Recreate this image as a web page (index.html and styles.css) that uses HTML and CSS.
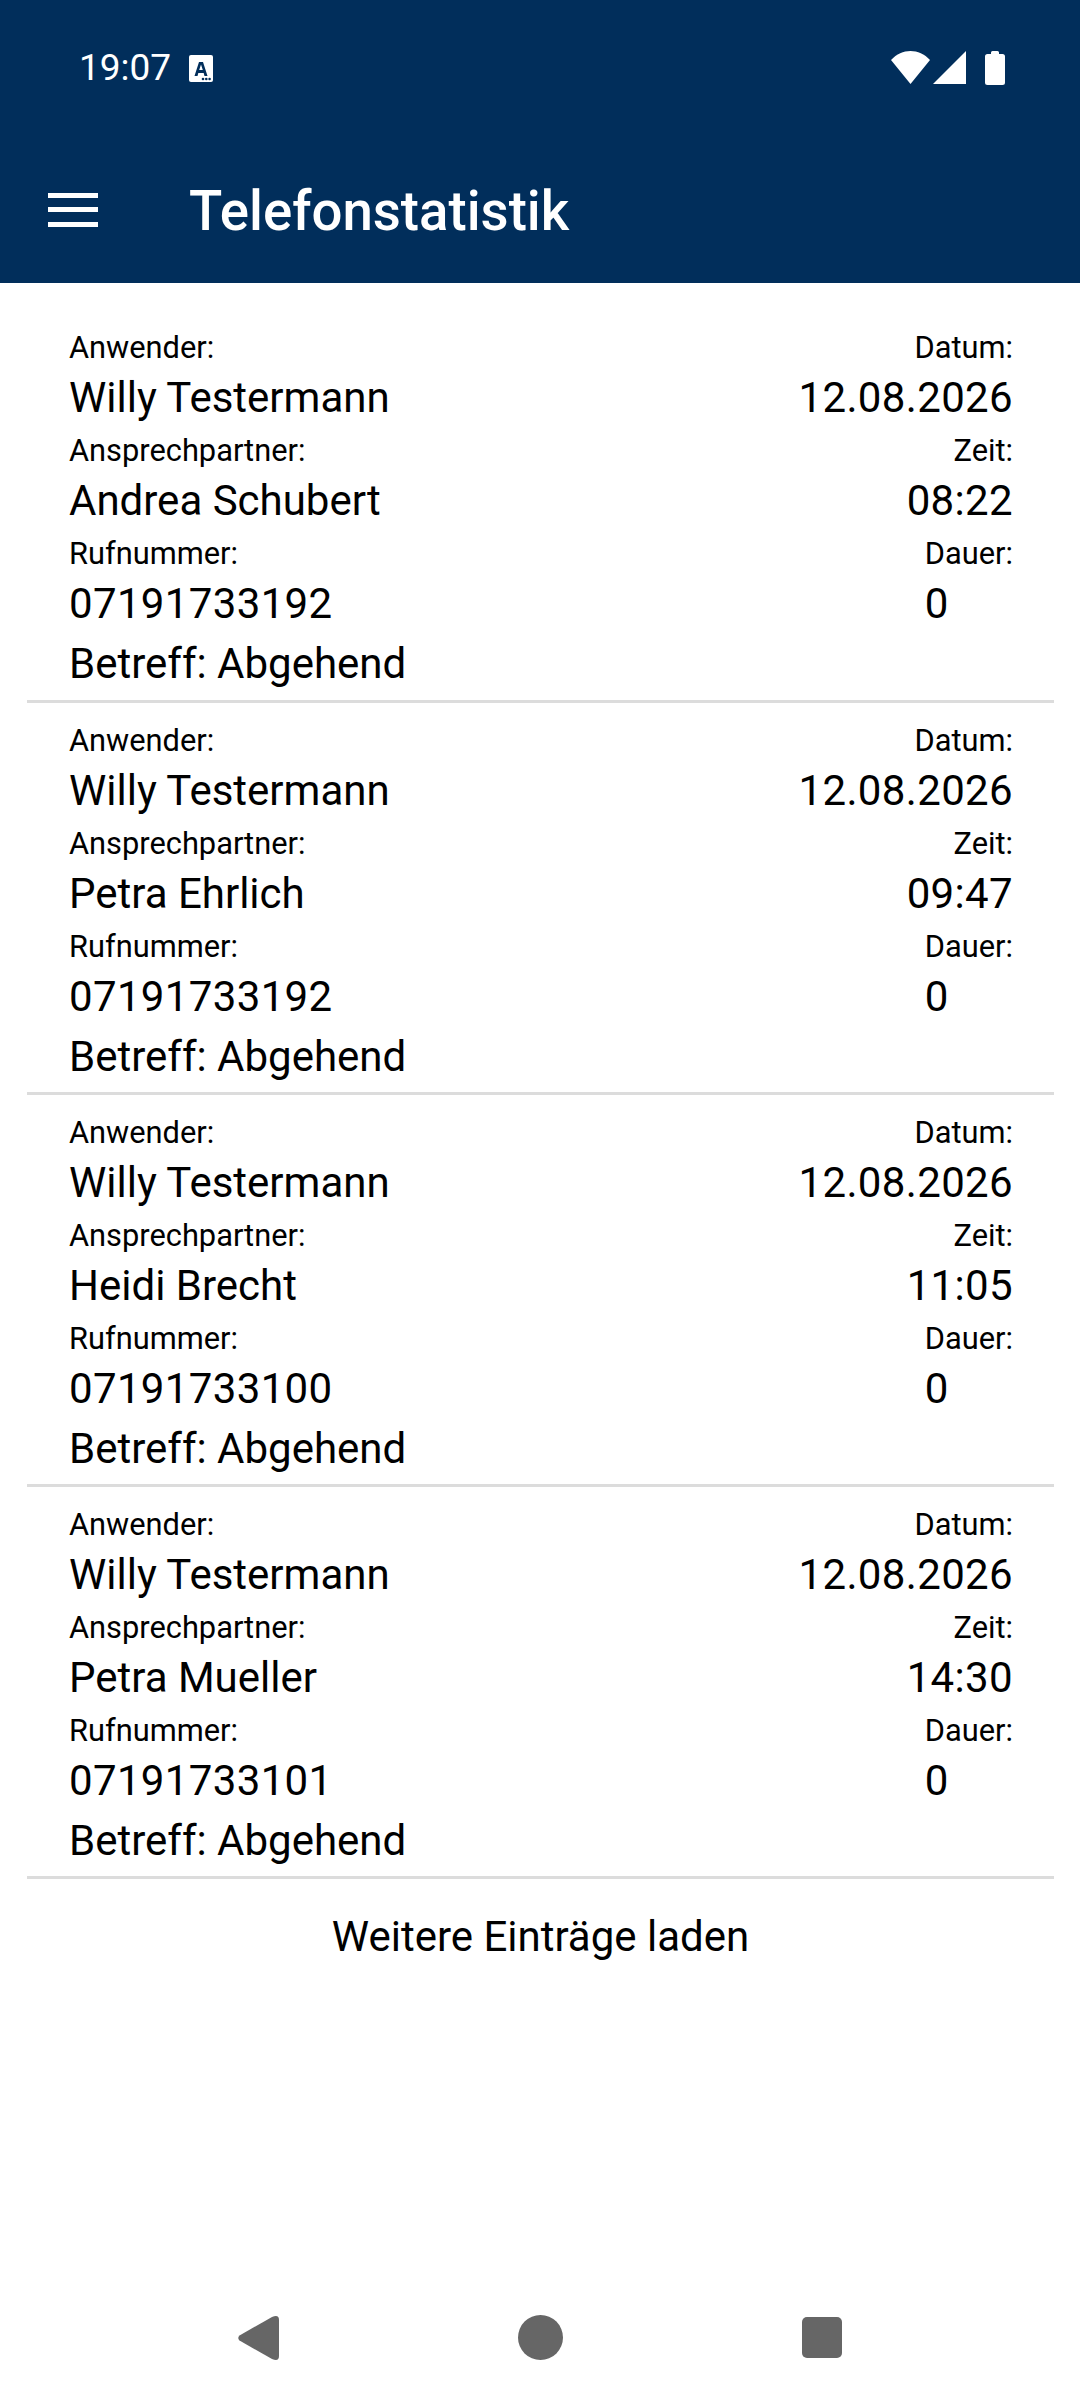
FILE: index.html
```html
<!DOCTYPE html>
<html lang="de">
<head>
  <meta charset="UTF-8">
  <title>Telefonstatistik</title>
  <meta name="viewport" content="width=device-width, initial-scale=1.0">
  <link rel="stylesheet" href="styles.css">
</head>
<body>
  <header class="appbar">
    <div class="status">
      <span class="clock">19:07</span>
      <svg class="status-badge" width="24" height="27" viewBox="0 0 24 27">
        <rect width="24" height="27" rx="2" fill="#fff"/>
        <path fill-rule="evenodd" d="M5.500 21 L10 7 H14 L18.500 21 H15.500 L14.700 18 H9.300 L8.500 21 Z M10.200 15 H13.800 L12 9.500 Z" fill="#012e5b"/>
        <circle cx="14" cy="24" r="1.300" fill="#012e5b"/>
        <circle cx="17.300" cy="24" r="1.300" fill="#012e5b"/>
        <circle cx="20.600" cy="24" r="1.300" fill="#012e5b"/>
      </svg>
      <span class="status-icons">
        <svg width="39" height="33" viewBox="0 0 39 33"><path d="M0 9 C11 -3 28 -3 39 9 L19.500 33 Z" fill="#fff"/></svg>
        <svg class="signal" width="33" height="33" viewBox="0 0 33 33"><path d="M33 0 V33 H0 Z" fill="#fff"/></svg>
        <svg class="battery" width="20" height="34" viewBox="0 0 20 34"><path d="M6 3 V1.500 Q6 0 7.500 0 H12.500 Q14 0 14 1.500 V3 H17.500 Q20 3 20 5.500 V31.500 Q20 34 17.500 34 H2.500 Q0 34 0 31.500 V5.500 Q0 3 2.500 3 Z" fill="#fff"/></svg>
      </span>
    </div>
    <div class="toolbar">
      <button class="menu" aria-label="Menü"><i></i><i></i><i></i></button>
      <h1>Telefonstatistik</h1>
    </div>
  </header>

  <main class="list">
    <section class="entry">
      <div class="row"><div><label>Anwender:</label><p>Willy Testermann</p></div><div class="right"><label>Datum:</label><p class="num">12.08.2026</p></div></div>
      <div class="row"><div><label>Ansprechpartner:</label><p>Andrea Schubert</p></div><div class="right"><label>Zeit:</label><p class="num">08:22</p></div></div>
      <div class="row"><div><label>Rufnummer:</label><p class="num">07191733192</p></div><div class="right start"><label>Dauer:</label><p>0</p></div></div>
      <p class="subject">Betreff: Abgehend</p>
    </section>
    <section class="entry">
      <div class="row"><div><label>Anwender:</label><p>Willy Testermann</p></div><div class="right"><label>Datum:</label><p class="num">12.08.2026</p></div></div>
      <div class="row"><div><label>Ansprechpartner:</label><p>Petra Ehrlich</p></div><div class="right"><label>Zeit:</label><p class="num">09:47</p></div></div>
      <div class="row"><div><label>Rufnummer:</label><p class="num">07191733192</p></div><div class="right start"><label>Dauer:</label><p>0</p></div></div>
      <p class="subject">Betreff: Abgehend</p>
    </section>
    <section class="entry">
      <div class="row"><div><label>Anwender:</label><p>Willy Testermann</p></div><div class="right"><label>Datum:</label><p class="num">12.08.2026</p></div></div>
      <div class="row"><div><label>Ansprechpartner:</label><p>Heidi Brecht</p></div><div class="right"><label>Zeit:</label><p class="num">11:05</p></div></div>
      <div class="row"><div><label>Rufnummer:</label><p class="num">07191733100</p></div><div class="right start"><label>Dauer:</label><p>0</p></div></div>
      <p class="subject">Betreff: Abgehend</p>
    </section>
    <section class="entry">
      <div class="row"><div><label>Anwender:</label><p>Willy Testermann</p></div><div class="right"><label>Datum:</label><p class="num">12.08.2026</p></div></div>
      <div class="row"><div><label>Ansprechpartner:</label><p>Petra Mueller</p></div><div class="right"><label>Zeit:</label><p class="num">14:30</p></div></div>
      <div class="row"><div><label>Rufnummer:</label><p class="num">07191733101</p></div><div class="right start"><label>Dauer:</label><p>0</p></div></div>
      <p class="subject">Betreff: Abgehend</p>
    </section>
    <div class="more">Weitere Einträge laden</div>
  </main>

  <nav class="navbar">
    <span class="nav-btn"><svg width="41" height="44" viewBox="0 0 41 44"><path d="M1.500 19.500 L34 1 Q41 -2 41 4 V40 Q41 46 34 43 L1.500 24.500 Q-1 22 1.500 19.500 Z" fill="#666"/></svg></span>
    <span class="nav-btn"><svg width="45" height="45" viewBox="0 0 45 45"><circle cx="22.500" cy="22.500" r="22.500" fill="#666"/></svg></span>
    <span class="nav-btn"><svg width="40" height="41" viewBox="0 0 40 41"><rect width="40" height="41" rx="5" fill="#666"/></svg></span>
  </nav>
</body>
</html>
```

FILE: styles.css
```css
* { box-sizing: border-box; }
body { margin: 0; height: 2400px; display: flex; flex-direction: column; background: #fff; color: #000; font-family: Roboto, sans-serif; }
p, h1 { margin: 0; font-weight: 400; }
label { display: block; }

.appbar { height: 283px; background: #012e5b; color: #fff; flex: none; }
.status { height: 136px; padding: 51px 75px 0 79px; display: flex; align-items: flex-start; }
.clock { font-size: 37px; line-height: 34px; }
.status-badge { margin: 4px 0 0 18px; }
.status-icons { margin-left: auto; display: flex; align-items: flex-start; }
.signal { margin-left: 3px; }
.battery { margin-left: 19px; }

.toolbar { display: flex; align-items: center; height: 147px; padding-left: 48px; }
.menu { width: 50px; height: 34px; padding: 0; border: 0; background: none; display: flex; flex-direction: column; justify-content: space-between; }
.menu i { display: block; height: 5px; background: #fff; }
.toolbar h1 { margin: 2px 0 0 91px; font-size: 54.6px; font-weight: 500; line-height: 60px; }

.list { flex: 1; padding: 0 26px 0 27px; }
.entry { padding: 18px 41px 0 42px; height: 392px; border-bottom: 3px solid #dcdcdc; }
.entry:first-child { height: 420px; padding-top: 45px; }
.row { display: flex; justify-content: space-between; height: 103px; }
.row label { font-size: 30.8px; line-height: 39px; }
.row p { font-size: 42px; line-height: 62px; }
.row .num { letter-spacing: 0.35px; }
.right { text-align: right; }
.right.start { text-align: left; }
.subject { font-size: 42px; line-height: 50px; margin-top: 2px; }
.more { text-align: center; font-size: 42px; line-height: 50px; margin-top: 33px; }

.navbar { flex: none; height: 126px; display: flex; justify-content: center; align-items: flex-start; padding-top: 41px; }
.nav-btn { width: 282px; height: 45px; display: flex; justify-content: center; align-items: center; }
```
